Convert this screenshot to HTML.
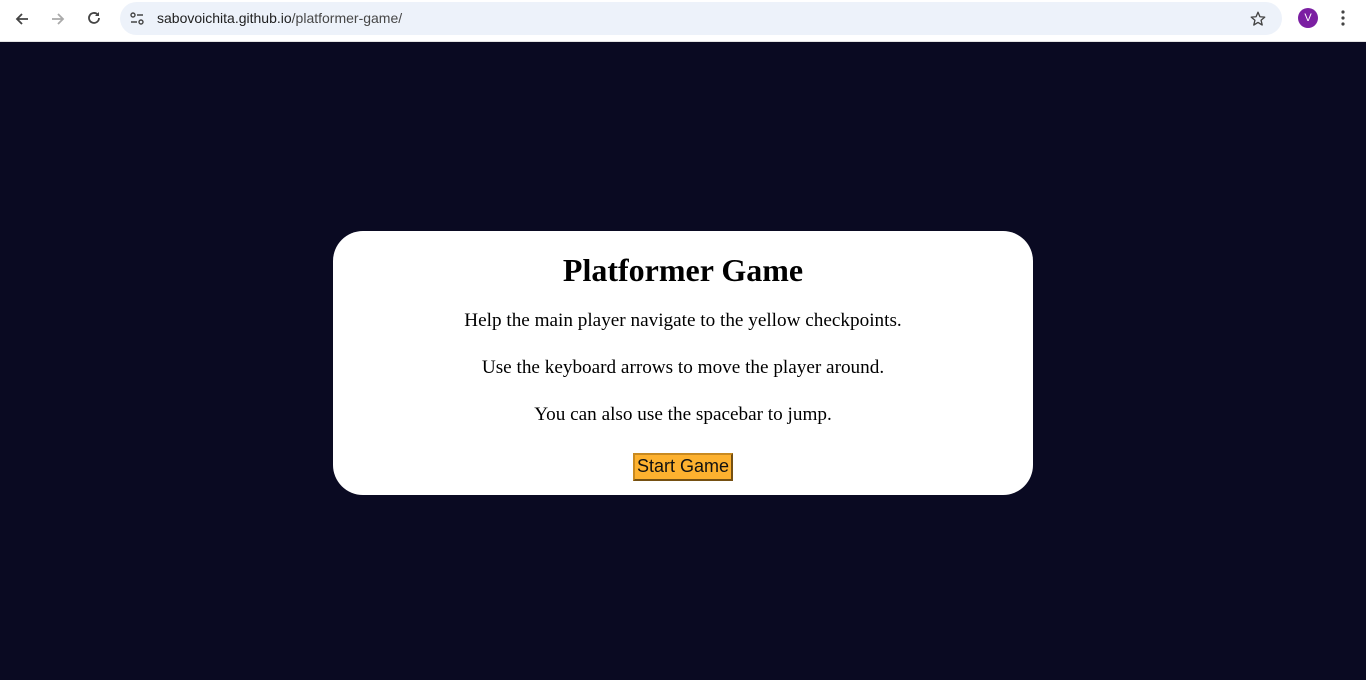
<!DOCTYPE html>
<html><head><meta charset="utf-8"><style>
*{margin:0;padding:0;box-sizing:border-box}
body{width:1366px;height:680px;overflow:hidden;background:#0a0a22;font-family:"Liberation Serif",serif;position:relative}
.bar{position:absolute;left:0;top:0;width:1366px;height:42px;background:#fff;border-bottom:1px solid #e3e3e3}
.url{position:absolute;left:120px;top:2px;width:1162px;height:33px;border-radius:17px;background:#edf2fa}
.url span{position:absolute;left:37px;top:8px;font:14px "Liberation Sans",sans-serif;color:#1f1f1f}
.url span i{font-style:normal;color:#474747}
.ico{position:absolute}
.card{position:absolute;left:333px;top:231px;width:700px;height:264px;background:#fff;border-radius:30px;text-align:center}
h1{position:absolute;left:0;right:0;top:21px;font-size:32px;font-weight:bold;color:#000}
p{position:absolute;left:0;right:0;font-size:19.2px;color:#000}
.btn{position:absolute;left:300px;top:222px;width:100px;height:28px;background:#fdb12f;border:2px outset #c98a20;font:18px "Liberation Sans",sans-serif;color:#111;line-height:23px}
</style></head><body>
<div class="bar">
<svg class="ico" style="left:13px;top:10px" width="18" height="18" viewBox="0 0 18 18"><path d="M15 9H4M9 4L4 9l5 5" stroke="#444" stroke-width="1.8" fill="none"/></svg>
<svg class="ico" style="left:49px;top:10px" width="18" height="18" viewBox="0 0 18 18"><path d="M3 9h11M9 4l5 5-5 5" stroke="#aaa" stroke-width="1.8" fill="none"/></svg>
<svg class="ico" style="left:85px;top:9px" width="18" height="18" viewBox="0 0 18 18"><path d="M14 9a5 5 0 1 1-1.5-3.6" stroke="#444" stroke-width="1.8" fill="none"/><path d="M14 3v4h-4z" fill="#444"/></svg>
<div class="url">
<svg class="ico" style="left:9px;top:9px" width="16" height="16" viewBox="0 0 16 16"><circle cx="4" cy="4" r="2" stroke="#444" stroke-width="1.4" fill="none"/><path d="M8 4h6M2 11h6" stroke="#444" stroke-width="1.4"/><circle cx="12" cy="11" r="2" stroke="#444" stroke-width="1.4" fill="none"/></svg>
<span>sabovoichita.github.io<i>/platformer-game/</i></span>
<svg class="ico" style="left:1129px;top:8px" width="18" height="18" viewBox="0 0 24 24"><path d="M12 3l2.6 6 6.4.5-4.9 4.2 1.5 6.3L12 16.6 6.4 20l1.5-6.3L3 9.5 9.4 9z" stroke="#444" stroke-width="1.8" fill="none" stroke-linejoin="round"/></svg>
</div>
<div class="ico" style="left:1298px;top:8px;width:20px;height:20px;border-radius:50%;background:#7b1fa2;color:#fff;font:11px 'Liberation Sans',sans-serif;text-align:center;line-height:20px">V</div>
<svg class="ico" style="left:1340px;top:9px" width="6" height="18" viewBox="0 0 6 18"><circle cx="3" cy="3" r="1.6" fill="#444"/><circle cx="3" cy="9" r="1.6" fill="#444"/><circle cx="3" cy="15" r="1.6" fill="#444"/></svg>
</div>
<div class="card">
<h1>Platformer Game</h1>
<p style="top:79px">Help the main player navigate to the yellow checkpoints.</p>
<p style="top:126px">Use the keyboard arrows to move the player around.</p>
<p style="top:173px">You can also use the spacebar to jump.</p>
<div class="btn">Start Game</div>
</div>
</body></html>
